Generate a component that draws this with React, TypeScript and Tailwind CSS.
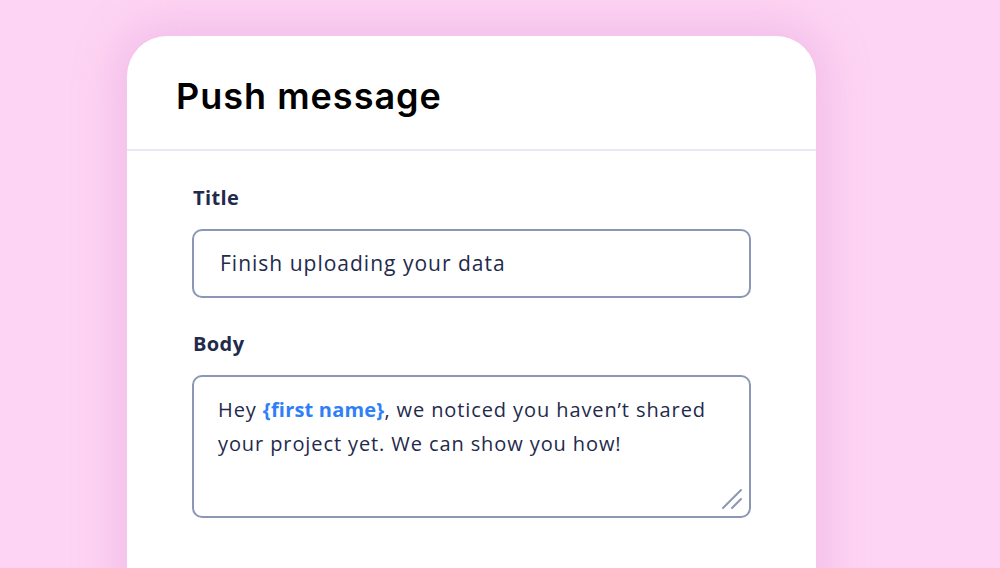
import React from 'react';

export default function App() {
  return (
    <div className="w-[1000px] h-[568px] overflow-hidden bg-[#fdd4f3] pt-[36px] pl-[127px]">
      <div
        className="w-[689px] h-[600px] bg-white rounded-t-[40px] shadow-[0_0_40px_12px_rgba(225,150,215,0.35)]"
        style={{ fontFamily: '"Open Sans", "Noto Sans", sans-serif' }}
      >
        <div className="h-[115px] flex items-center pl-[49px] pt-[6px] border-b-2 border-[#e8e9f6]">
          <h1
            className="text-[36px] font-semibold text-black tracking-[1px]"
            style={{ fontFamily: 'Inter, "Noto Sans", sans-serif' }}
          >
            Push message
          </h1>
        </div>

        <div className="pl-[65px] pr-[65px] pt-[37px] flex flex-col">
          <label className="text-[20px] font-bold text-[#1f2a4c] leading-none ml-[1px] tracking-[0.4px]">Title</label>
          <div className="mt-[21px] h-[69px] w-[559px] rounded-[10px] border-2 border-[#8b97b4] flex items-center pl-[26px]">
            <span className="text-[21px] text-[#1f2a4c] tracking-[1px]">Finish uploading your data</span>
          </div>

          <label className="mt-[36px] text-[20px] font-bold text-[#1f2a4c] leading-none ml-[1px] tracking-[0.4px]">Body</label>
          <div className="relative mt-[21px] h-[143px] w-[559px] rounded-[10px] border-2 border-[#8b97b4] pl-[24px] pr-[18px] pt-[16px]">
            <p className="text-[20px] leading-[34px] text-[#1f2a4c] tracking-[0.9px]">
              Hey <span className="font-bold text-[#2f80f7] tracking-[0.2px]">{'{first name}'}</span>, we noticed you haven’t shared
              your project yet. We can show you how!
            </p>
            <svg className="absolute right-[6px] bottom-[6px]" width="22" height="22" viewBox="0 0 22 22">
              <path d="M2 20 L20 2 M11 20 L20 11" stroke="#8b97b4" strokeWidth="2" strokeLinecap="round" />
            </svg>
          </div>
        </div>
      </div>
    </div>
  );
}
